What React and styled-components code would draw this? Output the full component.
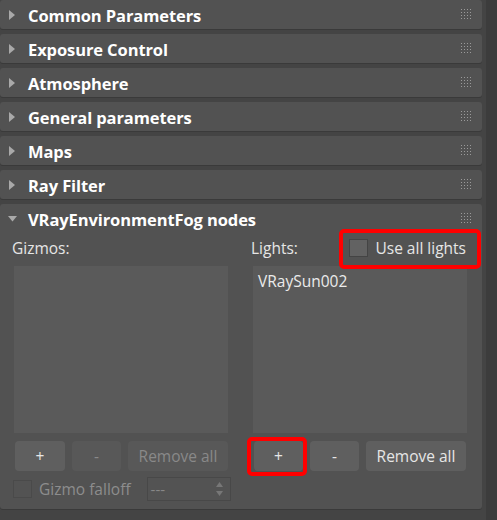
import React from 'react'
import styled, { createGlobalStyle } from 'styled-components'

const GlobalStyle = createGlobalStyle`
  html, body {
    margin: 0;
    background: #444444;
  }
  body {
    font-family: 'Open Sans', 'Noto Sans', sans-serif;
  }
`

const rollouts = [
  'Common Parameters',
  'Exposure Control',
  'Atmosphere',
  'General parameters',
  'Maps',
  'Ray Filter'
]

const Grip = () => (
  <GripBox width='10' height='10' viewBox='0 0 10 10'>
    {[0, 3, 6, 9].map(y =>
      [0, 3, 6, 9].map(x => <rect key={x + '-' + y} x={x} y={y} width='1' height='1' fill='#9a9a9a' />)
    )}
  </GripBox>
)

const Arrow = ({ open }) => (
  <ArrowBox width='10' height='10' viewBox='0 0 10 10'>
    {open ? <polygon points='0,2 9,2 4.5,7.5' fill='#a9a9a9' /> : <polygon points='1,0 7,5 1,10' fill='#a9a9a9' />}
  </ArrowBox>
)

const Header = ({ title, open }) => (
  <HeaderRow>
    <Arrow open={open} />
    <Title>{title}</Title>
    <Grip />
  </HeaderRow>
)

const App = () => (
  <>
    <GlobalStyle />
    <Page>
      <Stack>
        {rollouts.map(t => (
          <Rollout key={t}>
            <Header title={t} />
          </Rollout>
        ))}
        <Rollout open>
          <Header title='VRayEnvironmentFog nodes' open />
          <Columns>
            <Column>
              <LabelRow>
                <Label>Gizmos:</Label>
              </LabelRow>
              <ListBox />
              <Buttons>
                <Btn w={50}>+</Btn>
                <Btn w={49} disabled>-</Btn>
                <Btn w={100} disabled>Remove all</Btn>
              </Buttons>
              <FalloffRow>
                <Check disabled />
                <Label disabled>Gizmo falloff</Label>
                <Select>
                  <span>---</span>
                  <svg width='9' height='16' viewBox='0 0 9 16'>
                    <polygon points='4.5,1 8,6 1,6' fill='#777' />
                    <polygon points='4.5,15 8,10 1,10' fill='#777' />
                  </svg>
                </Select>
              </FalloffRow>
            </Column>
            <Column>
              <LabelRow>
                <Label>Lights:</Label>
                <Marked inset='-10px -15px -12px -10px'>
                  <CheckLabel>
                    <Check />
                    <Label>Use all lights</Label>
                  </CheckLabel>
                </Marked>
              </LabelRow>
              <ListBox>
                <Item>VRaySun002</Item>
              </ListBox>
              <Buttons>
                <Marked inset='-4px -4px -5px -7px'>
                  <Btn w={49}>+</Btn>
                </Marked>
                <Btn w={49}>-</Btn>
                <Btn w={100}>Remove all</Btn>
              </Buttons>
            </Column>
          </Columns>
        </Rollout>
      </Stack>
      <Scrollbar />
    </Page>
  </>
)

export default App

const Page = styled.div`
  display: flex;
  width: 497px;
  height: 520px;
  overflow: hidden;
  background: #444444;
`

const Stack = styled.div`
  width: 482px;
  display: flex;
  flex-direction: column;
  gap: 5px;
  margin-right: 4px;
`

const Scrollbar = styled.div`
  flex: 1;
  background: #3c3c3c;
`

const Rollout = styled.div`
  background: #525252;
  border-radius: 3px;
  box-shadow: 0 1px 0 #3a3a3a;
  height: ${p => (p.open ? '305px' : '29px')};
`

const HeaderRow = styled.div`
  display: flex;
  align-items: center;
  height: 29px;
  padding: 0 11px 0 8px;
`

const ArrowBox = styled.svg`
  flex: none;
  margin-top: 1px;
`

const Title = styled.div`
  flex: 1;
  margin: 2px 0 0 10px;
  color: #ffffff;
  font-weight: 700;
  font-size: 16.5px;
  letter-spacing: -0.1px;
`

const GripBox = styled.svg`
  flex: none;
  margin-top: -1px;
`

const Columns = styled.div`
  display: grid;
  grid-template-columns: 239px 1fr;
  padding-left: 12px;
`

const Column = styled.div`
  display: flex;
  flex-direction: column;
`

const LabelRow = styled.div`
  display: flex;
  align-items: center;
  justify-content: space-between;
  height: 30px;
  margin-bottom: 3px;
  padding-right: 16px;
`

const Label = styled.span`
  color: ${p => (p.disabled ? '#8d8d8d' : '#e6e6e6')};
  font-size: 15.5px;
`

const Marked = styled.div`
  position: relative;
  display: flex;
  &::after {
    content: '';
    position: absolute;
    inset: ${p => p.inset};
    border: 4px solid #ff0000;
    border-radius: 5px;
    pointer-events: none;
  }
`

const CheckLabel = styled.div`
  display: flex;
  align-items: center;
  gap: 7px;
  height: 18px;
`

const Check = styled.div`
  width: 17px;
  height: 16px;
  margin-left: ${p => (p.disabled ? '1px' : '0')};
  background: ${p => (p.disabled ? '#535353' : '#626262')};
  border: 1px solid ${p => (p.disabled ? '#4a4a4a' : '#444444')};
`

const ListBox = styled.div`
  width: 214px;
  height: 167px;
  margin-left: 2px;
  background: #5a5a5a;
  box-sizing: border-box;
  padding: 4px 5px;
`

const Item = styled.div`
  color: #ebebeb;
  font-size: 15.5px;
`

const Buttons = styled.div`
  display: flex;
  gap: 7px;
  margin: 8px 0 0 3px;
`

const Btn = styled.button`
  width: ${p => p.w}px;
  height: 30px;
  border: none;
  border-radius: 4px;
  background: ${p => (p.disabled ? '#585858' : '#5f5f5f')};
  color: ${p => (p.disabled ? '#898989' : '#e6e6e6')};
  font-family: inherit;
  font-size: 15.5px;
  padding: 0;
`

const FalloffRow = styled.div`
  display: flex;
  align-items: center;
  gap: 7px;
  margin-top: 4px;
  height: 28px;
`

const Select = styled.div`
  display: flex;
  align-items: center;
  justify-content: space-between;
  width: 84px;
  height: 24px;
  box-sizing: border-box;
  margin-left: 9px;
  padding: 0 6px 0 3px;
  border: 1px solid #484848;
  background: #535353;
  color: #888;
  font-size: 15px;
`
